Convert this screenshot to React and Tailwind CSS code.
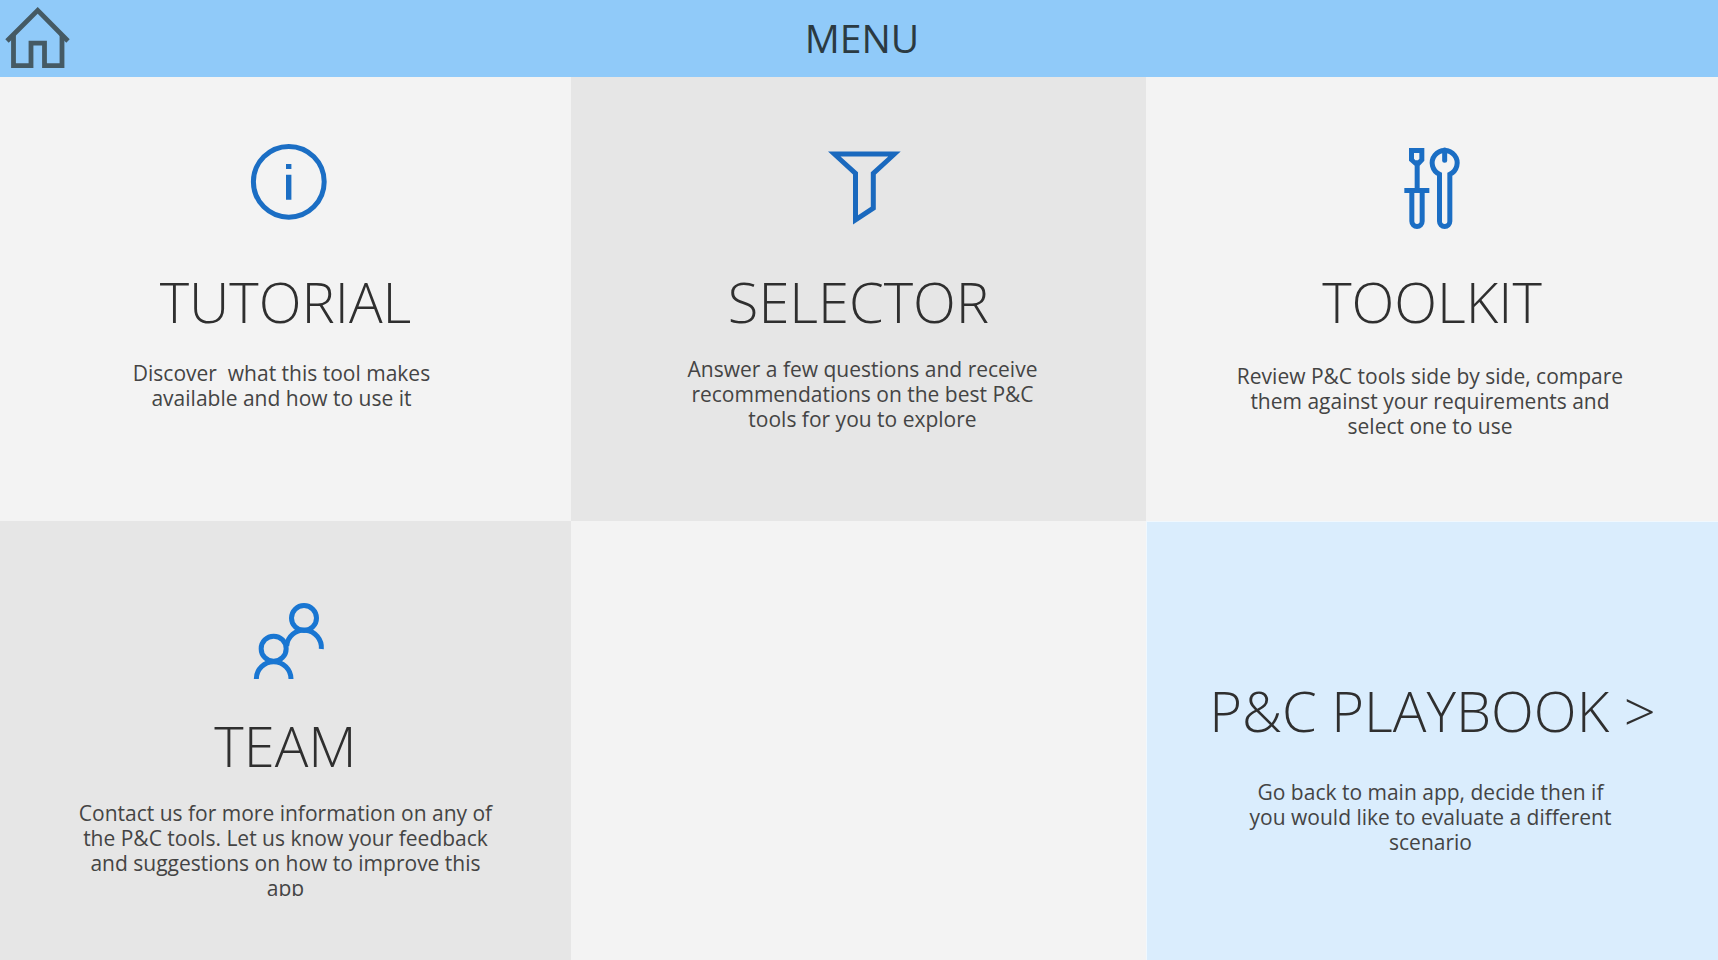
const HomeIcon = () => (
  <svg viewBox="0 0 76 77" className="h-[77px] w-[76px]" fill="none" stroke="#455a64" strokeWidth="4.8" aria-hidden="true">
    <path d="M7 41 37.700 10.3 68 41" />
    <path d="M13.5 35V65.6H31V43.2H44.5V65.6H62V35" />
  </svg>
);

const InfoIcon = () => (
  <svg viewBox="0 0 120 100" className="h-[100px] w-[120px]" fill="none" aria-hidden="true">
    <circle cx="58.8" cy="51.8" r="35.4" stroke="#1b6ec4" strokeWidth="5" />
    <path d="M56 34h5.4v5H56zM56 44.7h5.4v25H56z" fill="#1b6ec4" />
  </svg>
);

const FunnelIcon = () => (
  <svg viewBox="0 0 120 100" className="h-[100px] w-[120px]" fill="#1a69be" fillRule="evenodd" aria-hidden="true">
    <path d="M19 21.5H91.7L66.8 44.5V79.5L44 94.5V44.5ZM31.5 26.5 49 42.3V85.3L61.8 76.8V42.3L79.3 26.5Z" />
  </svg>
);

const ToolsIcon = () => (
  <svg viewBox="0 0 330 300" className="h-[100px] w-[110px]" fill="none" stroke="#1b6ec4" strokeWidth="15" aria-hidden="true">
    <path d="M90 54H136V92L122 107V180H107V107L90 92ZM105 69V86L109 91H117L121 86V69Z" fill="#1b6ec4" fillRule="evenodd" stroke="none" />
    <path d="M76 181.500H151" />
    <path d="M98.500 182V274a15.500 15.500 0 0 0 31 0V182" />
    <path d="M181.500 274V133A37.500 37.500 0 1 1 212.500 133V274a15.500 15.500 0 0 1-31 0Z" />
    <path d="M197 60V91" strokeLinecap="round" />
  </svg>
);

const PeopleIcon = () => (
  <svg viewBox="0 0 360 300" className="h-[100px] w-[120px]" fill="none" stroke="#1976d2" strokeWidth="15" aria-hidden="true">
    <circle cx="222" cy="84" r="37.500" />
    <path d="M170 168A52 52 0 0 1 274 177" />
    <circle cx="131" cy="176" r="37.500" />
    <path d="M79 267a52 52 0 0 1 104 0" />
  </svg>
);

const tiles = [
  {
    title: "TUTORIAL",
    text: "Discover  what this tool makes available and how to use it",
    icon: <InfoIcon />,
    tile: "bg-[#f3f3f3] pt-[53px]",
    iconBox: "pl-2 h-[137px]",
    body: "mt-[26px] w-[320px] pr-2",
  },
  {
    title: "SELECTOR",
    text: "Answer a few questions and receive recommendations on the best P&C tools for you to explore",
    icon: <FunnelIcon />,
    tile: "bg-[#e6e6e6] pt-[53px]",
    iconBox: "pl-5 h-[137px]",
    body: "mt-[22px] w-[368px] pl-2",
  },
  {
    title: "TOOLKIT",
    text: "Review P&C tools side by side, compare them against your requirements and select one to use",
    icon: <ToolsIcon />,
    tile: "bg-[#f3f3f3] pt-[53px]",
    iconBox: "pl-1 h-[137px]",
    body: "mt-[29px] w-[410px] pr-1",
  },
  {
    title: "TEAM",
    text: "Contact us for more information on any of the P&C tools. Let us know your feedback and suggestions on how to improve this app",
    icon: <PeopleIcon />,
    tile: "bg-[#e6e6e6] pt-[69px]",
    iconBox: "pl-2 h-[121px]",
    body: "mt-[22px] w-[426px] h-[95px] overflow-hidden",
  },
  null,
  {
    title: "P&C PLAYBOOK >",
    text: "Go back to main app, decide then if you would like to evaluate a different scenario",
    tile: "bg-[#daedfd] pt-[154px] border-l border-t border-white/60",
    body: "mt-9 w-[376px] pr-1",
  },
];

function Tile({ title, text, icon, tile, iconBox, body }) {
  return (
    <a href="#" className={`flex flex-col items-center text-center ${tile}`}>
      {icon && <span className={`block ${iconBox}`}>{icon}</span>}
      <h2 className="text-[56px] leading-[68px] font-light whitespace-nowrap text-[#2f2f2f]">{title}</h2>
      <p className={`text-[21px] leading-[25px] whitespace-pre-wrap text-[#444444] ${body}`}>{text}</p>
    </a>
  );
}

export default function App() {
  return (
    <div className="flex min-h-screen flex-col bg-[#f3f3f3] font-['Open_Sans','Noto_Sans',sans-serif]">
      <header className="grid h-[77px] grid-cols-[1fr_auto_1fr] items-center bg-[#90caf9]">
        <button type="button" aria-label="Home" className="justify-self-start">
          <HomeIcon />
        </button>
        <h1 className="pb-0.5 pl-1.5 text-[39px] leading-[52px] text-[#2b3a42]">MENU</h1>
      </header>
      <main className="grid grow grid-cols-[571fr_575fr_572fr] grid-rows-[444fr_439fr]">
        {tiles.map((t, i) => (t ? <Tile key={t.title} {...t} /> : <div key={i} className="bg-[#f3f3f3]" />))}
      </main>
    </div>
  );
}
